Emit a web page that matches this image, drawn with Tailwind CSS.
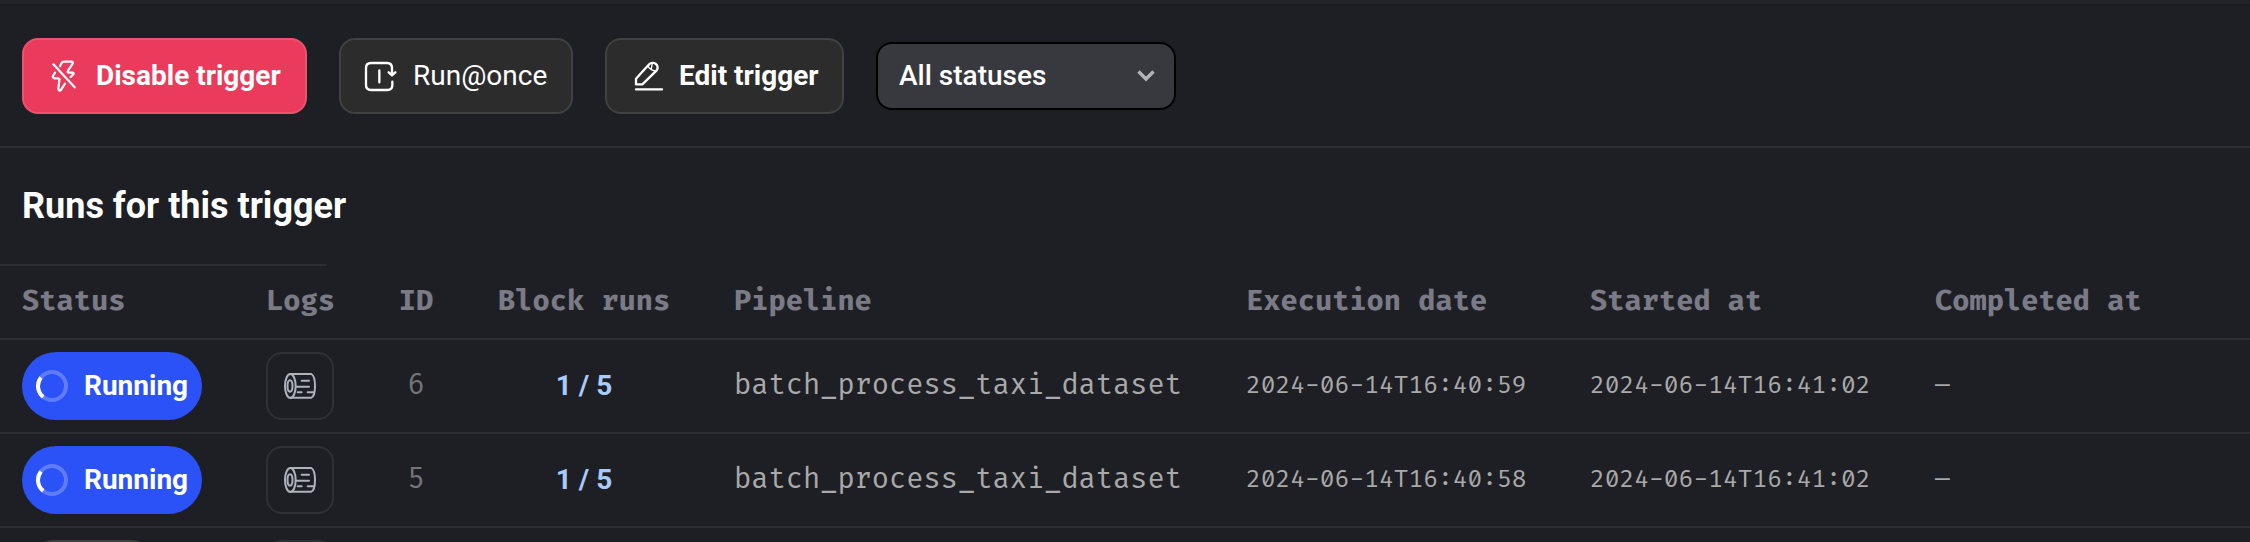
<!DOCTYPE html>
<html lang="en">
<head>
<meta charset="utf-8">
<title>Trigger runs</title>
<script src="https://cdn.jsdelivr.net/npm/@tailwindcss/browser@4"></script>
</head>
<body class="bg-[#1e1f24] text-white font-['Roboto',sans-serif] w-[2250px] h-[542px] overflow-hidden">
<svg class="hidden">
  <symbol id="log" viewBox="66 93 108 90">
    <g fill="none" stroke="currentColor" stroke-width="6" stroke-linecap="round">
      <ellipse cx="91" cy="138" rx="16" ry="36"/>
      <ellipse cx="90" cy="138" rx="7.5" ry="17"/>
      <path d="M91 102H154C161 106 165 120 165 138C165 156 161 170 154 173H91M125 122H147M109 140H147M113 157H125M143 157H162"/>
    </g>
  </symbol>
  <symbol id="spinner" viewBox="0 0 32 32">
    <circle cx="16" cy="16" r="14" fill="none" stroke="#fff" stroke-opacity=".25" stroke-width="4"/>
    <path d="M5 7.4A14 14 0 0 0 7.2 26.9" fill="none" stroke="#fff" stroke-width="4"/>
  </symbol>
</svg>

<div class="h-1.5 bg-[#23242b] border-b-2 border-[#1d1d20]"></div>
<div class="h-[142px] border-b-2 border-[#2e2f34] flex items-center gap-8 pl-[22px]">
  <button class="w-[285px] h-[76px] rounded-2xl border-2 border-[#ec5270] bg-[#eb3b5c] flex items-center pl-[27px] gap-5 font-bold text-[28px] whitespace-nowrap">
    <svg class="w-[25px] h-8 shrink-0" viewBox="63 60 75 96" fill="none" stroke="#fff" stroke-width="6.5" stroke-linecap="round" stroke-linejoin="round"><path d="M70 73L134 142M90 79L94 70Q97 65 102 65H124Q130 65 128 71L114 92Q111 98 117 98H128Q133 99 130 103L122 111M75 98L69 108Q67 114 73 115H84Q90 115 88 121L85 145Q86 154 92 151L105 131"/></svg>
    <span>Disable trigger</span>
  </button>
  <button class="w-[234px] h-[76px] rounded-2xl border-2 border-[#414141] bg-[#2c2c2c] flex items-center pl-[23px] gap-4 text-[28px] whitespace-nowrap">
    <svg class="w-[33px] h-8 shrink-0" viewBox="42 60 99 96" fill="none" stroke="#fff" stroke-width="7" stroke-linecap="round" stroke-linejoin="round"><path d="M126 103V84Q126 69 111 69H63Q48 69 48 84V135Q48 150 63 150H112Q127 150 127 136V125M88 91V127M116 97L126 106L136 97"/></svg>
    <span>Run@once</span>
  </button>
  <button class="w-[239px] h-[76px] rounded-2xl border-2 border-[#414141] bg-[#2c2c2c] flex items-center pl-[27px] gap-[15px] font-bold text-[28px] whitespace-nowrap">
    <svg class="w-[30px] h-8 shrink-0" viewBox="42 60 90 96" fill="none" stroke="#fff" stroke-width="7" stroke-linecap="round" stroke-linejoin="round"><path d="M48 133V116L86 74C98 60 121 75 110 91L67 133ZM48 148H126"/><path d="M84 78Q88 89 105 93M97 70L94 85" stroke-width="4"/></svg>
    <span>Edit trigger</span>
  </button>
  <div class="w-[300px] h-[68px] rounded-2xl border-2 border-black bg-[#38393f] flex items-center justify-between pl-[21px] pr-[19px] font-medium text-[28px]">
    <span>All statuses</span>
    <svg class="w-[18px] h-3" viewBox="0 0 18 12" fill="none" stroke="#b3b4b9" stroke-width="3.4"><path d="M1.5 1.5L9 9L16.5 1.5"/></svg>
  </div>
</div>

<div class="h-[116px] flex items-center pl-[22px]">
  <h2 class="text-[36px] font-bold leading-none whitespace-nowrap">Runs for this trigger</h2>
</div>
<div class="h-0.5 w-[326px] bg-[#2e2f34]"></div>

<div class="font-['Fira_Code','Liberation_Mono',monospace] text-[28px]">
  <div class="grid grid-cols-[180px_68px_36px_172px_448px_280px_281px_1fr] gap-x-16 pl-[22px] h-[74px] border-b-2 border-[#2e2f34] items-center font-bold text-[#7a7b86] whitespace-nowrap">
    <div>Status</div><div>Logs</div><div class="text-center">ID</div><div>Block runs</div><div>Pipeline</div><div>Execution date</div><div>Started at</div><div>Completed at</div>
  </div>
  <div class="grid grid-cols-[180px_68px_36px_172px_448px_280px_281px_1fr] gap-x-16 pl-[22px] h-[94px] border-b-2 border-[#2e2f34] items-center text-[#a9a9a9] whitespace-nowrap">
    <div class="h-[68px] rounded-[34px] bg-[#2a52f7] text-white flex items-center pl-[14px] gap-4 font-['Roboto',sans-serif] font-bold text-[28px]"><svg class="size-8 shrink-0"><use href="#spinner"/></svg>Running</div>
    <div class="h-[68px] rounded-2xl border-2 border-[#2f3035] flex items-center justify-center text-[#aeb2bc]"><svg class="w-9 h-[30px]"><use href="#log"/></svg></div>
    <div class="text-center text-[#74757a]">6</div>
    <div class="text-center font-['Roboto',sans-serif] font-bold text-[28px] text-[#a9cbfb]">1 / 5</div>
    <div>batch_process_taxi_dataset</div>
    <div class="text-2xl">2024-06-14T16:40:59</div>
    <div class="text-2xl">2024-06-14T16:41:02</div>
    <div class="text-2xl">—</div>
  </div>
  <div class="grid grid-cols-[180px_68px_36px_172px_448px_280px_281px_1fr] gap-x-16 pl-[22px] h-[94px] border-b-2 border-[#2e2f34] items-center text-[#a9a9a9] whitespace-nowrap">
    <div class="h-[68px] rounded-[34px] bg-[#2a52f7] text-white flex items-center pl-[14px] gap-4 font-['Roboto',sans-serif] font-bold text-[28px]"><svg class="size-8 shrink-0"><use href="#spinner"/></svg>Running</div>
    <div class="h-[68px] rounded-2xl border-2 border-[#2f3035] flex items-center justify-center text-[#aeb2bc]"><svg class="w-9 h-[30px]"><use href="#log"/></svg></div>
    <div class="text-center text-[#74757a]">5</div>
    <div class="text-center font-['Roboto',sans-serif] font-bold text-[28px] text-[#a9cbfb]">1 / 5</div>
    <div>batch_process_taxi_dataset</div>
    <div class="text-2xl">2024-06-14T16:40:58</div>
    <div class="text-2xl">2024-06-14T16:41:02</div>
    <div class="text-2xl">—</div>
  </div>
  <div class="flex gap-[103px] pl-[22px] pt-3 h-[14px] overflow-hidden">
    <div class="w-[141px] h-[68px] shrink-0 rounded-[34px] border-2 border-[#414141] bg-[#2c2c2c]"></div>
    <div class="w-[68px] h-[68px] shrink-0 rounded-2xl border-2 border-[#2f3035]"></div>
  </div>
</div>
</body>
</html>
